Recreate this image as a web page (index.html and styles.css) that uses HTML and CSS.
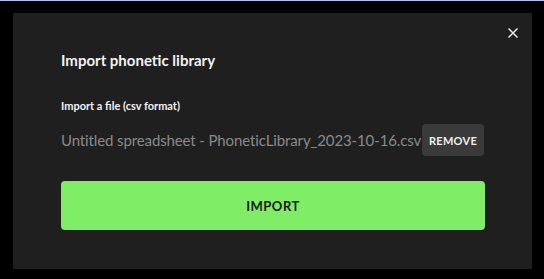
FILE: index.html
```html
<!DOCTYPE html>
<html>
<head>
<meta charset="utf-8">
<link rel="stylesheet" href="styles.css">
</head>
<body>
<div class="topline"></div>
<div class="backdrop">
  <div class="modal">
    <button class="close" aria-label="Close">
      <svg width="10" height="10" viewBox="0 0 10 10"><path d="M0.5 0.5 L9.5 9.5 M9.5 0.5 L0.5 9.5" stroke="#e8e8e8" stroke-width="1.5" fill="none"/></svg>
    </button>
    <h1 class="title">Import phonetic library</h1>
    <div class="label">Import a file (csv format)</div>
    <div class="filerow">
      <span class="filename">Untitled spreadsheet - PhoneticLibrary_2023-10-16.csv</span>
      <button class="remove">REMOVE</button>
    </div>
    <button class="import">IMPORT</button>
  </div>
</div>
</body>
</html>
```
FILE: styles.css
```css
html, body {
  margin: 0;
  padding: 0;
  background: #000;
  width: 544px;
  height: 279px;
  overflow: hidden;
  font-family: "Lato", "Open Sans", sans-serif;
}
.topline {
  height: 1px;
  background: #a9c1e6;
}
.backdrop {
  padding: 12px 11px 0 13px;
}
.modal {
  position: relative;
  width: 519px;
  height: 256px;
  background: #1f1f1f;
  box-sizing: border-box;
  padding: 38px 47px 0 48px;
}
.close {
  position: absolute;
  top: 15px;
  right: 14px;
  width: 10px;
  height: 10px;
  padding: 0;
  border: 0;
  background: none;
  display: flex;
}
.title {
  margin: 0;
  font-size: 15px;
  font-weight: 700;
  color: #f2f2f2;
  line-height: 18px;
}
.label {
  margin-top: 30px;
  font-size: 11px;
  font-weight: 700;
  color: #f2f2f2;
  line-height: 14px;
}
.filerow {
  margin-top: 11px;
  display: flex;
  align-items: center;
  height: 32px;
}
.filename {
  font-size: 15px;
  letter-spacing: -0.12px;
  color: #8a8a8a;
  width: 361px;
  white-space: nowrap;
  overflow: hidden;
}
.remove {
  width: 62px;
  height: 32px;
  border: 0;
  border-radius: 4px;
  background: #3a3a3a;
  color: #f0f0f0;
  font-family: inherit;
  font-weight: 700;
  font-size: 11px;
  letter-spacing: 0.3px;
  padding: 0;
}
.import {
  margin-top: 25px;
  width: 424px;
  height: 49px;
  border: 0;
  border-radius: 4px;
  background: #7fee66;
  color: #1a1a1a;
  font-family: inherit;
  font-weight: 700;
  font-size: 13px;
  letter-spacing: 0.5px;
  padding: 0;
  display: block;
}
```
